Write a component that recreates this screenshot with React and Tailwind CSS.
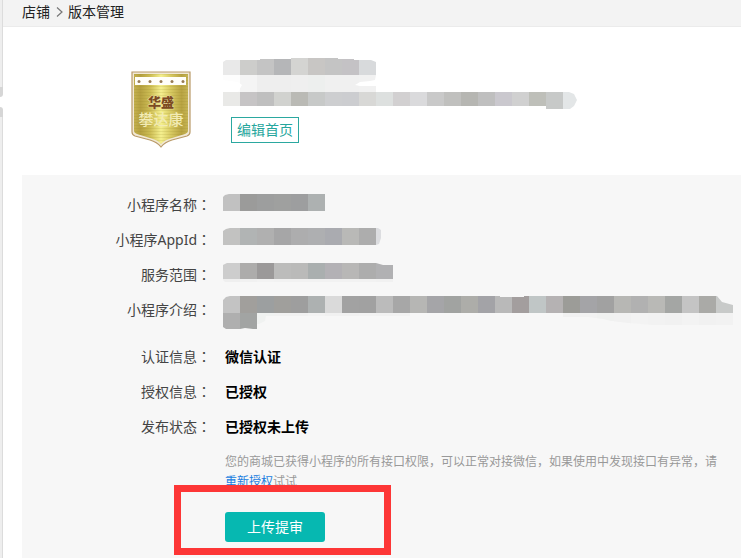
import React from 'react';

const BLOCK = 17;

const profileRows = [
  { y: 0, h: 17, cells: ['#e9e9e9', '#cdcdcb', '#c4c4c4', '#b5b6b8', '#d4d4d2', '#c8c6c4', '#c4c4c4', '#c4c2c5', '#d8dadc'] },
  { y: 17, h: 17, cells: ['#fdfdfd', '#f4f4f4', '#eeeeee', '#eeeeee', '#efefef', '#edefee', '#f0f0f0', '#f0f0f0', '#f1f1f1'] },
  {
    y: 34,
    h: 14,
    cells: [
      '#e9e9e7', '#c6c4c5', '#bfbfbf', '#d1d2cf', '#babab5', '#c7c9c8', '#cdced0', '#cccdd0', '#d8d8d6', '#dde0df',
      '#d2d0d1', '#dadadc', '#c9c9c9', '#c0c0be', '#b6b6b2', '#bfbfbf', '#cac8ce', '#d0d0d0', '#bebfb9',
    ],
  },
  { y: 34, h: 17, x: 323, cells: ['#c7c9c8', '#e3e6e7'] },
];

const nameRows = [
  { y: 7, h: 17, cells: ['#c1c1c1', '#9b9b9a', '#9d9e9e', '#9fa09f', '#9d9e9f', '#adb1b1'] },
];

const appIdRows = [
  { y: 6, h: 17, cells: ['#c2c2c1', '#b1b4b4', '#b0b0b0', '#a6a6a7', '#adadae', '#aeafb1', '#aaabb0', '#b9b9b7', '#adadad', '#dcdde0'] },
];

const scopeRows = [
  { y: 6, h: 19, cells: ['#efefef', '#f1f1f1', '#f3f3f3', '#f2f2f2', '#f2f2f2', '#f2f2f2', '#f2f2f2', '#f2f2f2', '#f2f2f2', '#f1f1f1'] },
  { y: 6, h: 16, cells: ['#cdcdcd', '#adacab', '#9b9999', '#bcbcbb', '#babab9', '#aaafaf', '#b3b1b5', '#b8b7b6', '#adadad', '#b1b1b3'] },
];

const introRows = [
  {
    y: 4,
    h: 17,
    cells: [
      '#c3c3c3', '#a19f9c', '#9c9fa0', '#a09f9c', '#9e9e9e', '#adb1b1', '#dadada', '#a2a2a2', '#a1a1a1', '#bbbbbb',
      '#a7a7a7', '#b6b6b4', '#a5a5a8', '#a1a3a1', '#adada9', '#a3a3a7', '#b9b9b9', '#a39e9e', '#c0c6c6', '#b5b2b3',
      '#9c9c98', '#a4a4a7', '#a1a1a1', '#b7b7b4', '#b1b1b1', '#b9b9b6', '#a4a6a4', '#c4c4c4', '#aaaaa7', '#c8cac9',
    ],
  },
  { y: 21, h: 16, cells: ['#afafaf', '#a2a4a3'] },
  { y: 21, h: 11, x: 34, cells: ['#f0f2f1'] },
  { y: 21, h: 3, x: 51, cells: ['#f1f1f1', '#f1f1f1', '#f3f3f3', '#f1f1f1', '#f1f1f1', '#f2f2f2', '#f1f1f1', '#f2f2f2'] },
  { y: 21, h: 8, x: 340, cells: ['#f1f1f1', '#f2f2f2', '#f0f1f0'] },
  { y: 21, h: 12, x: 391, cells: ['#f1f1f1', '#f3f3f3', '#f2f2f2', '#f1f1f1', '#f3f3f3', '#f1f1f1', '#f2f2f2'] },
];

function Mosaic({ id, rows, width, height, outline, className }) {
  return (
    <svg width={width} height={height} className={className} shapeRendering="crispEdges" aria-hidden="true">
      <clipPath id={id}>
        <path d={outline} />
      </clipPath>
      <g clipPath={`url(#${id})`}>
        {rows.map((row, r) =>
          row.cells.map((fill, i) => (
            <rect key={`${r}-${i}`} x={(row.x || 0) + i * BLOCK} y={row.y} width={BLOCK} height={row.h} fill={fill} />
          ))
        )}
      </g>
    </svg>
  );
}

function Logo() {
  return (
    <svg width="60" height="77" viewBox="0 0 60 77" className="shrink-0" role="img" aria-label="华盛 攀达康">
      <defs>
        <linearGradient id="gold" x1="0" y1="0" x2="1" y2="0">
          <stop offset="0" stopColor="#c4b04e" />
          <stop offset="0.12" stopColor="#b5a040" />
          <stop offset="0.3" stopColor="#cdbd54" />
          <stop offset="0.5" stopColor="#f5f08f" />
          <stop offset="0.68" stopColor="#d8ca62" />
          <stop offset="0.88" stopColor="#b8a342" />
          <stop offset="1" stopColor="#c6b455" />
        </linearGradient>
        <pattern id="lines" width="4" height="3" patternUnits="userSpaceOnUse">
          <rect width="4" height="1" fill="#8f7d20" opacity="0.15" />
        </pattern>
      </defs>
      <path d="M1 1H59V61Q59 64 56 65L41 69Q34 71 30 76Q26 71 19 69L4 65Q1 64 1 61Z" fill="#f1e8d5" stroke="#b99a68" strokeWidth="1.2" />
      <path d="M3 3H57V60Q57 62 54 63L41 67Q33 69 30 73Q27 69 19 67L6 63Q3 62 3 60Z" fill="url(#gold)" />
      <path d="M3 3H57V60Q57 62 54 63L41 67Q33 69 30 73Q27 69 19 67L6 63Q3 62 3 60Z" fill="url(#lines)" />
      <rect x="4" y="6" width="51" height="8" fill="#fffefa" />
      {[8, 19, 30, 41, 52].map((x) => (
        <circle key={x} cx={x} cy="10.5" r="1.5" fill="#987c55" />
      ))}
      <text x="30" y="36" textAnchor="middle" fontSize="13" fontWeight="900" fill="#7c4a22" stroke="#e9dc9c" strokeWidth="1" paintOrder="stroke">
        华盛
      </text>
      <text x="30" y="54" textAnchor="middle" fontSize="15" fontWeight="500" fill="#f2ebb4">
        攀达康
      </text>
    </svg>
  );
}

function Row({ label, children }) {
  return (
    <div className="flex gap-3 leading-[35px]">
      <dt className="w-[189px] shrink-0 text-right text-[#444]">
        {label}
        <span className="font-['Noto_Sans_CJK_TC',sans-serif]">：</span>
      </dt>
      <dd className="min-w-0 flex-1">{children}</dd>
    </div>
  );
}

function Breadcrumb() {
  return (
    <nav className="flex h-[27px] items-center border-b border-[#ebebeb] bg-[#f3f3f3] pb-0.5 pl-[19px] text-[#222]">
      <a href="#shop">店铺</a>
      <svg width="18" height="12" viewBox="0 0 18 12" fill="none" stroke="#777" strokeWidth="1.2" aria-hidden="true">
        <path d="M7 1.5L12 6L7 10.5" />
      </svg>
      <span>版本管理</span>
    </nav>
  );
}

function Profile() {
  return (
    <section className="flex items-start gap-8 pt-[31px] pb-[27px] pl-32">
      <div className="pt-[13px]">
        <Logo />
      </div>
      <div>
        <Mosaic
          id="profile"
          rows={profileRows}
          width={354}
          height={51}
          outline="M0 4L3 2H37V1H68V0H115V1H131V2H148L153 4V17L152 22L147 23L137 24L132 27L137 28H153V34H346L351 36L354 42L351 48L347 51H145V50H137V48H15V49H5V50H0V34H15L19 27L15 24L0 22Z"
          className="block"
        />
        <button type="button" className="mt-2 ml-2 h-[26px] w-[68px] border border-[#2ba8a0] bg-white text-[#26a69d]">
          编辑首页
        </button>
      </div>
    </section>
  );
}

function VersionPanel() {
  return (
    <section className="ml-[19px] flex-1 bg-[#f7f7f7] pt-3 pr-[22px] pb-4">
      <dl>
        <Row label="小程序名称">
          <Mosaic id="name" rows={nameRows} width={102} height={35} outline="M0 10L2 8L6 7H102V24H0Z" className="block" />
        </Row>
        <Row label="小程序AppId">
          <Mosaic id="appid" rows={appIdRows} width={170} height={35} outline="M0 9L3 7L7 6H155L158 8V16L156 22L153 23H0Z" className="block" />
        </Row>
        <Row label="服务范围">
          <Mosaic id="scope" rows={scopeRows} width={170} height={35} outline="M0 8L4 6H153L160 8H170V27H160L150 25H2L0 23Z" className="block" />
        </Row>
        <Row label="小程序介绍">
          <Mosaic
            id="intro"
            rows={introRows}
            width={510}
            height={47}
            outline="M0 8L3 5L7 4H277V5H301V4H494L499 10L510 13V33H430L405 31L388 29L380 27L365 25H320V24H43L42 29L34 33V37H30L22 36L17 37H3L0 35Z"
            className="-mr-[22px] block max-w-none"
          />
        </Row>
        <Row label="认证信息">
          <strong className="pl-0.5 font-bold text-black">微信认证</strong>
        </Row>
        <Row label="授权信息">
          <strong className="pl-0.5 font-bold text-black">已授权</strong>
        </Row>
        <Row label="发布状态">
          <strong className="pl-0.5 font-bold text-black">已授权未上传</strong>
        </Row>
      </dl>
      <div className="mt-2 pl-[203px]">
        <p className="text-xs leading-5 text-[#999]">
          您的商城已获得小程序的所有接口权限，可以正常对接微信，如果使用中发现接口有异常，请
          <a href="#authorize" className="text-[#1a7ee0]">重新授权</a>试试
        </p>
        <div className="relative mt-5 w-[100px]">
          <button type="button" className="block h-[30px] w-full rounded-[3px] bg-[#06b8b1] text-white">
            上传提审
          </button>
          <div className="pointer-events-none absolute -top-[27px] -left-[51px] h-[70px] w-[217px] border-7 border-[#fd3636]" />
        </div>
      </div>
    </section>
  );
}

function App() {
  return (
    <div className="flex min-h-screen overflow-x-hidden bg-white font-['Noto_Sans','Noto_Sans_CJK_SC',sans-serif] text-sm">
      <aside className="flex w-[3px] shrink-0 flex-col">
        <div className="h-[87px] border-r border-[#dcdcdc] bg-[#eeeeee]" />
        <div className="h-[10px] rounded-br-[3px] bg-[#d6d6d6]" />
        <div className="h-[10px]" />
        <div className="h-[10px] rounded-tr-[3px] bg-[#d6d6d6]" />
        <div className="flex-1 border-r border-[#dcdcdc] bg-[#eeeeee]" />
      </aside>
      <main className="flex min-w-0 flex-1 flex-col">
        <Breadcrumb />
        <Profile />
        <VersionPanel />
      </main>
    </div>
  );
}

export default App;
